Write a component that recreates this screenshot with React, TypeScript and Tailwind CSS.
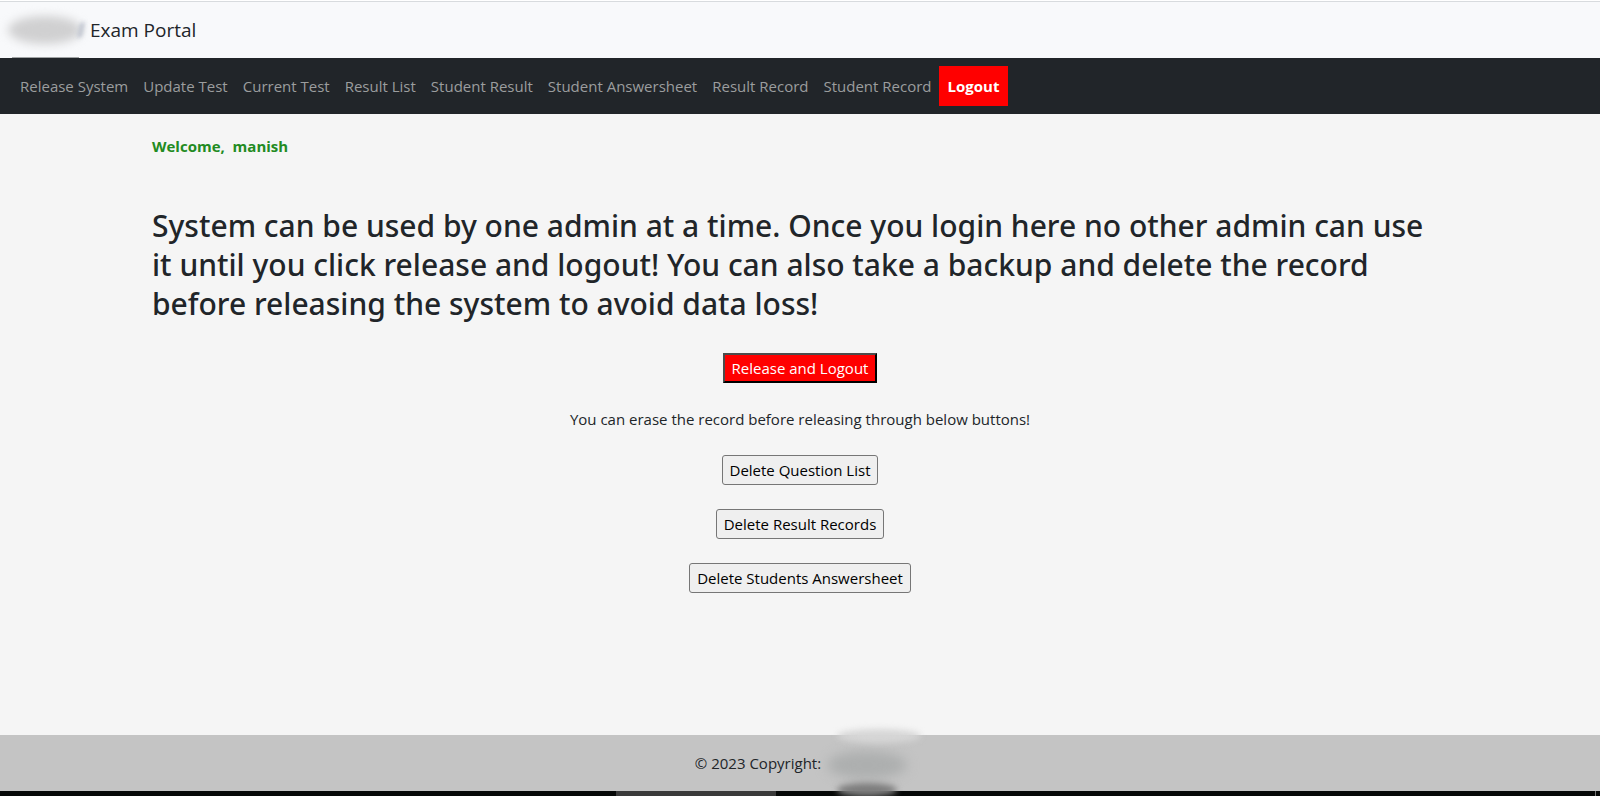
const navItems = [
  'Release System',
  'Update Test',
  'Current Test',
  'Result List',
  'Student Result',
  'Student Answersheet',
  'Result Record',
  'Student Record',
];

const deleteActions = ['Delete Question List', 'Delete Result Records', 'Delete Students Answersheet'];

function Header() {
  return (
    <header className="bg-white pt-px">
      <div className="relative flex h-[57px] items-center border-t border-[#d8dbde] bg-[#f8f9fb] pl-3">
        <div className="relative h-10 w-[78px] shrink-0">
          <div className="absolute top-1.5 -left-1 h-7 w-[74px] rounded-[50%] bg-[#d0d0d1] blur-[5px]" />
          <div className="absolute top-3 left-[67px] h-4 w-1 -skew-x-12 rounded-full bg-[#b9bfcb] blur-[2px]" />
        </div>
        <a href="#home" className="text-[19px] leading-[30px] text-[#212529]">
          Exam Portal
        </a>
        <div className="absolute bottom-0 left-3 h-px w-[67px] bg-[#a0a3a4]" />
      </div>
    </header>
  );
}

function NavBar() {
  return (
    <nav className="bg-[#212529] px-3 py-2">
      <ul className="flex">
        {navItems.map((item) => (
          <li key={item}>
            <a href="#nav" className="block py-2 pr-[7px] pl-2 leading-6 whitespace-nowrap text-[#9b9d9e]">
              {item}
            </a>
          </li>
        ))}
        <li>
          <a href="#logout" className="block bg-[#ff0000] px-[9px] py-2 leading-6 font-bold text-white">
            Logout
          </a>
        </li>
      </ul>
    </nav>
  );
}

function Footer() {
  return (
    <footer className="relative">
      <div className="relative z-10 flex h-14 items-center justify-center bg-[#c4c4c4] text-[#212529]">
        <span className="whitespace-nowrap">© 2023 Copyright:</span>
        <div className="relative h-10 w-[84px]">
          <div className="absolute top-2 left-1.5 h-7 w-[80px] rounded-[50%] bg-[#adafaf] blur-[6px]" />
          <div className="absolute -top-3.5 left-4 h-3.5 w-[84px] rounded-[50%] bg-[#d6d6d6] blur-[3px]" />
          <div className="absolute top-10 left-4 h-3.5 w-[60px] rounded-[50%] bg-[#7c7c7c] blur-[3px]" />
        </div>
      </div>
      <div className="flex h-[5px] justify-between bg-[#060807]">
        <div className="ml-[38.5%] w-[10%] bg-[#3a3a3a]" />
        <div className="mr-1 w-px bg-[#777777]" />
      </div>
    </footer>
  );
}

export default function App() {
  return (
    <div className="flex min-h-screen flex-col overflow-hidden bg-[#f5f5f5] font-['Open_Sans','Noto_Sans',sans-serif] text-[15px] leading-6 text-[#212529]">
      <Header />
      <NavBar />
      <main className="mx-auto flex w-full max-w-[1320px] grow flex-col px-3 pt-5">
        <p className="font-bold whitespace-pre text-[#228b22]">Welcome,{'  '}manish</p>
        <h1 className="mt-12 font-['Noto_Sans','Open_Sans',sans-serif] text-[30px] leading-[39px] font-medium">
          System can be used by one admin at a time. Once you login here no other admin can use it
          until you click release and logout! You can also take a backup and delete the record
          before releasing the system to avoid data loss!
        </h1>
        <div className="mt-[30px] flex flex-col items-center gap-6">
          <button
            type="button"
            className="h-[30px] border-2 border-t-[#4c4c4c] border-r-black border-b-black border-l-[#4c4c4c] bg-[#ff0000] px-[7px] text-white"
          >
            Release and Logout
          </button>
          <p>You can erase the record before releasing through below buttons!</p>
          {deleteActions.map((label) => (
            <button
              key={label}
              type="button"
              className="h-[30px] rounded-[3px] border border-[#767676] bg-[#efefef] px-[7px] text-black"
            >
              {label}
            </button>
          ))}
        </div>
      </main>
      <Footer />
    </div>
  );
}
